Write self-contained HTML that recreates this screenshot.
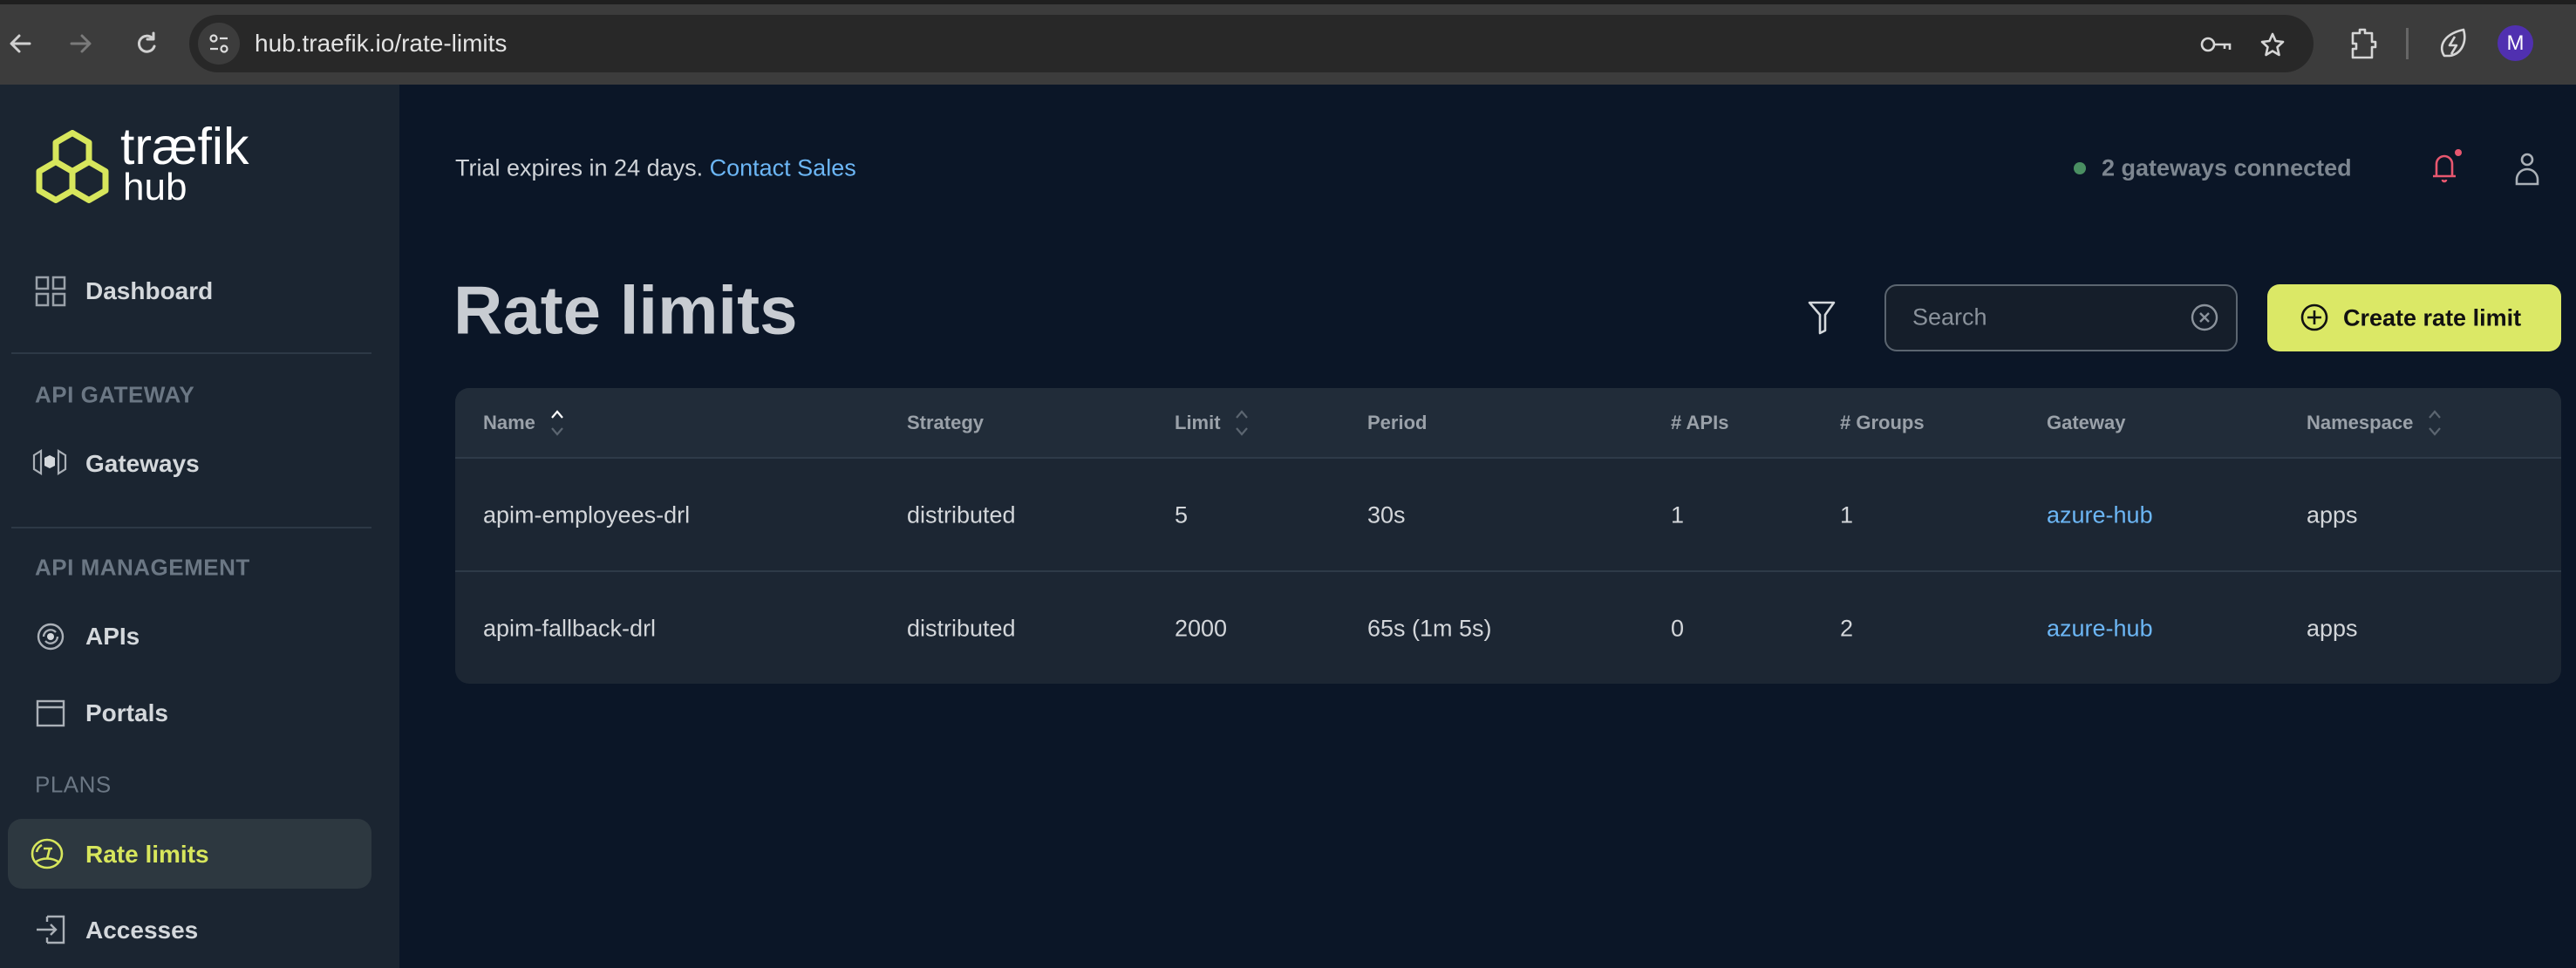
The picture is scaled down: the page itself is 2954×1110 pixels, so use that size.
<!DOCTYPE html>
<html><head><meta charset="utf-8"><style>
*{margin:0;padding:0;box-sizing:border-box}
body{width:2954px;height:1110px;overflow:hidden;background:#0b1627;font-family:"Liberation Sans",sans-serif;position:relative}
.a{position:absolute;white-space:nowrap}
.vc{transform:translateY(-50%)}
.nav{font-size:28px;font-weight:bold;color:#d4d8dc}
.sec{font-size:26px;font-weight:bold;color:#6b7784;letter-spacing:0.5px}
.th{font-size:22px;font-weight:bold;color:#9aa1a9}
.td{font-size:27px;color:#d3d6da}
.lnk{color:#6cb6f5}
</style></head><body>
<!-- browser chrome -->
<div class="a" style="left:0;top:0;width:2954px;height:97px;background:#3c3c3c"></div>
<div class="a" style="left:0;top:0;width:2954px;height:5px;background:#1f1f1f"></div>
<div class="a" style="left:217px;top:17px;width:2436px;height:66px;background:#282828;border-radius:33px"></div>
<div class="a" style="left:227px;top:26px;width:48px;height:48px;background:#3c3c3c;border-radius:24px"></div>
<svg class="a" style="left:0;top:30px" width="200" height="40" viewBox="0 0 200 40">
<g fill="none" stroke="#d0d0d0" stroke-width="3" stroke-linecap="round" stroke-linejoin="round">
<path d="M34 20H14M22 11l-9 9 9 9"/>
<path d="M82 20h20M94 11l9 9-9 9" stroke="#7a7a7a"/>
<path d="M175 14a9 9 0 1 0 2 9M176 8v7h-7"/>
</g></svg>
<svg class="a" style="left:237px;top:36px" width="28" height="28" viewBox="0 0 28 28"><g fill="none" stroke="#ddd" stroke-width="2.2"><circle cx="8" cy="8" r="3.5"/><path d="M15 8h9M4 20h9"/><circle cx="20" cy="20" r="3.5"/></g></svg>
<div class="a vc" style="left:292px;top:50px;font-size:28px;color:#e3e3e3">hub.traefik.io/rate-limits</div>
<svg class="a" style="left:2522px;top:36px" width="110" height="30" viewBox="0 0 110 30"><g fill="none" stroke="#d6d6d6" stroke-width="2.6"><circle cx="10" cy="15" r="7"/><path d="M17 15h18v6M29 15v5"/><path d="M84 3l3.5 8 8.5 1-6.5 6 2 9-7.5-4.5-7.5 4.5 2-9-6.5-6 8.5-1z" stroke-linejoin="round"/></g></svg>
<svg class="a" style="left:2690px;top:30px" width="40" height="40" viewBox="0 0 40 40"><path d="M8 8h8v-4h6v4h8v10h4v6h-4v12H8V26h4v-6H8z" fill="none" stroke="#d6d6d6" stroke-width="2.6" stroke-linejoin="round"/></svg>
<div class="a" style="left:2759px;top:32px;width:3px;height:36px;background:#666"></div>
<svg class="a" style="left:2795px;top:30px" width="38" height="40" viewBox="0 0 38 40"><path d="M8 34c-6-8-4-24 22-30 4 14-2 28-16 30zM20 12l-6 10h8l-6 10" fill="none" stroke="#d6d6d6" stroke-width="2.6" stroke-linejoin="round"/></svg>
<div class="a" style="left:2864px;top:29px;width:41px;height:41px;border-radius:50%;background:#5030b0;color:#fff;font-size:24px;text-align:center;line-height:41px">M</div>

<!-- sidebar -->
<div class="a" style="left:0;top:97px;width:458px;height:1013px;background:#1b2531"></div>
<svg class="a" style="left:39px;top:149px" width="88" height="84" viewBox="0 0 88 84"><g fill="none" stroke="#d7e65c" stroke-width="7" stroke-linejoin="round"><path d="M44 3.5L63 14.5V36.5L44 47.5L25 36.5V14.5Z"/><path d="M25 36.5L44 47.5V69.5L25 80.5L6 69.5V47.5Z"/><path d="M63 36.5L82 47.5V69.5L63 80.5L44 69.5V47.5Z"/></g></svg>
<div class="a" style="left:138px;top:134px;font-size:59px;color:#fff">træfik</div>
<div class="a" style="left:141px;top:190px;font-size:44px;color:#fff">hub</div>

<svg class="a" style="left:40px;top:316px" width="36" height="36" viewBox="0 0 36 36"><g fill="none" stroke="#9aa1a9" stroke-width="2.5"><rect x="2" y="2" width="13" height="13"/><rect x="21" y="2" width="13" height="13"/><rect x="2" y="21" width="13" height="13"/><rect x="21" y="21" width="13" height="13"/></g></svg>
<div class="a vc nav" style="left:98px;top:334px">Dashboard</div>
<div class="a" style="left:13px;top:404px;width:413px;height:2px;background:#2d3946"></div>
<div class="a vc sec" style="left:40px;top:453px">API GATEWAY</div>
<svg class="a" style="left:37px;top:514px" width="40" height="32" viewBox="0 0 40 32"><g fill="none" stroke="#aab0b7" stroke-width="2.2"><path d="M2 8l8-5v26l-8-5z"/><path d="M38 8l-8-5v26l8-5z"/></g><path d="M14 11l6-3 6 3v9l-6 3-6-3z" fill="#d4d8dc"/></svg>
<div class="a vc nav" style="left:98px;top:532px">Gateways</div>
<div class="a" style="left:13px;top:604px;width:413px;height:2px;background:#2d3946"></div>
<div class="a vc sec" style="left:40px;top:651px">API MANAGEMENT</div>
<svg class="a" style="left:41px;top:713px" width="34" height="34" viewBox="0 0 34 34"><g fill="none" stroke="#aab0b7" stroke-width="2.4"><circle cx="17" cy="17" r="14"/><path d="M9 17a8 8 0 0 1 14-5M25 17a8 8 0 0 1-14 5"/></g><circle cx="17" cy="17" r="4" fill="#d4d8dc"/></svg>
<div class="a vc nav" style="left:98px;top:730px">APIs</div>
<svg class="a" style="left:41px;top:802px" width="34" height="32" viewBox="0 0 34 32"><g fill="none" stroke="#aab0b7" stroke-width="2.4"><rect x="2" y="2" width="30" height="28"/><path d="M2 9h30"/></g></svg>
<div class="a vc nav" style="left:98px;top:818px">Portals</div>
<div class="a vc" style="left:40px;top:900px;font-size:26px;color:#6b7784;letter-spacing:0.5px">PLANS</div>
<div class="a" style="left:9px;top:939px;width:417px;height:80px;border-radius:16px;background:#2d3840"></div>
<svg class="a" style="left:34px;top:961px" width="40" height="36" viewBox="0 0 40 36"><g fill="none" stroke="#d7e65c" stroke-width="2.6"><ellipse cx="20" cy="18" rx="17" ry="16"/><path d="M6 28c8-6 20-6 28 0M20 24l3-12M16 12h10M8 16a12 12 0 0 1 6-8"/></g></svg>
<div class="a vc nav" style="left:98px;top:980px;color:#d7e65c">Rate limits</div>
<svg class="a" style="left:40px;top:1049px" width="36" height="34" viewBox="0 0 36 34"><g fill="none" stroke="#aab0b7" stroke-width="2.4"><path d="M14 2h19v30H14M14 32v-6M14 2v6"/><path d="M2 17h22M18 11l6 6-6 6"/></g></svg>
<div class="a vc nav" style="left:98px;top:1067px">Accesses</div>

<!-- header -->
<div class="a vc" style="left:522px;top:193px;font-size:27px;color:#d0d4d9">Trial expires in 24 days. <span class="lnk">Contact Sales</span></div>
<div class="a" style="left:2378px;top:186px;width:14px;height:14px;border-radius:50%;background:#4a8f62"></div>
<div class="a vc" style="left:2410px;top:193px;font-size:27px;font-weight:bold;color:#7d8690">2 gateways connected</div>
<svg class="a" style="left:2784px;top:170px" width="40" height="44" viewBox="0 0 40 44"><g fill="none" stroke="#e8576f" stroke-width="2.6"><path d="M6 32h26M10 32V18a9 9 0 0 1 18 0v14"/><path d="M17 36a2 2 0 0 0 4 0"/></g><circle cx="35" cy="5" r="4" fill="#e8576f"/></svg>
<svg class="a" style="left:2882px;top:174px" width="32" height="40" viewBox="0 0 32 40"><g fill="none" stroke="#aab0b7" stroke-width="2.6"><circle cx="16" cy="9" r="6"/><path d="M4 37v-5a12 12 0 0 1 24 0v5z"/></g></svg>

<div class="a vc" style="left:520px;top:356px;font-size:78px;font-weight:bold;color:#c8ccd2">Rate limits</div>
<svg class="a" style="left:2072px;top:344px" width="34" height="40" viewBox="0 0 34 40"><path d="M3 3h28l-10 14v18l-6 3V17z" fill="none" stroke="#d4d8dc" stroke-width="2.6" stroke-linejoin="round"/></svg>
<div class="a" style="left:2161px;top:326px;width:405px;height:77px;border:2px solid #5b6570;border-radius:14px;background:#151e2a"></div>
<div class="a vc" style="left:2193px;top:364px;font-size:27px;color:#8a929b">Search</div>
<svg class="a" style="left:2511px;top:347px" width="34" height="34" viewBox="0 0 34 34"><g fill="none" stroke="#8a929b" stroke-width="2.4"><circle cx="17" cy="17" r="14"/><path d="M12 12l10 10M22 12L12 22"/></g></svg>
<div class="a" style="left:2600px;top:326px;width:337px;height:77px;border-radius:14px;background:#dbe866"></div>
<svg class="a" style="left:2637px;top:347px" width="34" height="34" viewBox="0 0 34 34"><g fill="none" stroke="#111" stroke-width="2.6"><circle cx="17" cy="17" r="14"/><path d="M17 9v16M9 17h16"/></g></svg>
<div class="a vc" style="left:2687px;top:365px;font-size:27px;font-weight:bold;color:#111">Create rate limit</div>

<!-- table -->
<div class="a" style="left:522px;top:445px;width:2415px;height:339px;border-radius:16px;background:#1c2633;overflow:hidden">
<div style="height:81px;background:#212c39;border-bottom:2px solid #2e3a48"></div>
<div style="height:130px;border-bottom:2px solid #2e3a48"></div>
</div>
<div class="a vc th" style="left:554px;top:485px">Name</div>
<div class="a vc th" style="left:1040px;top:485px">Strategy</div>
<div class="a vc th" style="left:1347px;top:485px">Limit</div>
<div class="a vc th" style="left:1568px;top:485px">Period</div>
<div class="a vc th" style="left:1916px;top:485px"># APIs</div>
<div class="a vc th" style="left:2110px;top:485px"># Groups</div>
<div class="a vc th" style="left:2347px;top:485px">Gateway</div>
<div class="a vc th" style="left:2645px;top:485px">Namespace</div>
<svg class="a" style="left:630px;top:469px" width="18" height="32" viewBox="0 0 18 32"><g fill="none" stroke-width="2.2"><path d="M3 10l6-7 6 7" stroke="#fff"/><path d="M3 22l6 7 6-7" stroke="#5b6570"/></g></svg>
<svg class="a" style="left:1415px;top:469px" width="18" height="32" viewBox="0 0 18 32"><g fill="none" stroke="#5b6570" stroke-width="2.2"><path d="M3 10l6-7 6 7M3 22l6 7 6-7"/></g></svg>
<svg class="a" style="left:2783px;top:469px" width="18" height="32" viewBox="0 0 18 32"><g fill="none" stroke="#5b6570" stroke-width="2.2"><path d="M3 10l6-7 6 7M3 22l6 7 6-7"/></g></svg>

<div class="a vc td" style="left:554px;top:591px">apim-employees-drl</div>
<div class="a vc td" style="left:1040px;top:591px">distributed</div>
<div class="a vc td" style="left:1347px;top:591px">5</div>
<div class="a vc td" style="left:1568px;top:591px">30s</div>
<div class="a vc td" style="left:1916px;top:591px">1</div>
<div class="a vc td" style="left:2110px;top:591px">1</div>
<div class="a vc td lnk" style="left:2347px;top:591px">azure-hub</div>
<div class="a vc td" style="left:2645px;top:591px">apps</div>

<div class="a vc td" style="left:554px;top:721px">apim-fallback-drl</div>
<div class="a vc td" style="left:1040px;top:721px">distributed</div>
<div class="a vc td" style="left:1347px;top:721px">2000</div>
<div class="a vc td" style="left:1568px;top:721px">65s (1m 5s)</div>
<div class="a vc td" style="left:1916px;top:721px">0</div>
<div class="a vc td" style="left:2110px;top:721px">2</div>
<div class="a vc td lnk" style="left:2347px;top:721px">azure-hub</div>
<div class="a vc td" style="left:2645px;top:721px">apps</div>
</body></html>
